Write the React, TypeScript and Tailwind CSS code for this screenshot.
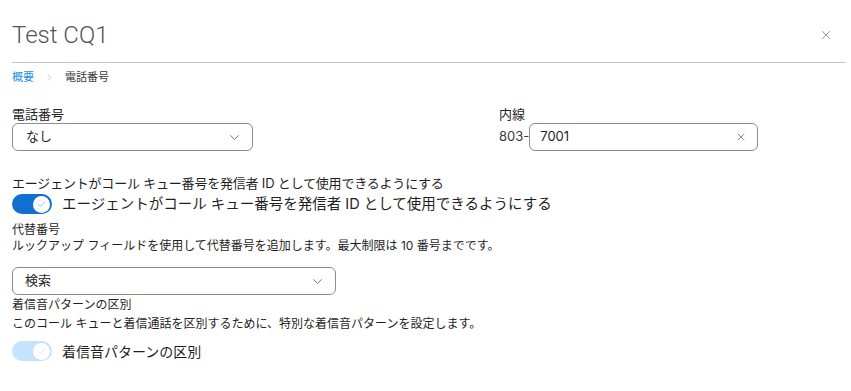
import React from "react";
import { ChevronDown, X, Check, ChevronRight } from "lucide-react";

const jp = { fontFamily: '"Inter", "Noto Sans CJK JP", sans-serif' };

function Toggle({ on, disabled }: { on: boolean; disabled?: boolean }) {
  return (
    <span
      className={
        "flex h-[20px] w-[40px] shrink-0 items-center rounded-full px-[2px] " +
        (on ? "justify-end " : "justify-start ") +
        (disabled ? "bg-[#c5e3fc]" : "bg-[#1170cf]")
      }
    >
      <span className="flex size-[17px] items-center justify-center rounded-full bg-white">
        <Check size={9} strokeWidth={1.5} className={disabled ? "text-[#b9d6ee]" : "text-[#6a8fb8]"} />
      </span>
    </span>
  );
}

export default function App() {
  const [ext, setExt] = React.useState("7001");

  return (
    <div className="h-[391px] w-[851px] overflow-hidden bg-white text-[#1f1f1f]" style={jp}>
      <div className="ml-3 mr-[5px] flex h-[63px] items-center justify-between border-b border-[#c8c8c8] pt-[8px]">
        <h1 className="font-['Roboto'] text-[24px] font-light text-[#545454]">Test CQ1</h1>
        <X size={14} strokeWidth={1.2} className="mr-[13px] text-[#6b6b6b]" />
      </div>

      <div className="px-3">
        <nav className="flex h-[28px] items-center text-[11px] leading-none">
          <span className="text-[#1f8ee6]">概要</span>
          <ChevronRight size={11} strokeWidth={1.2} className="mx-[10px] text-[#9a9a9a]" />
          <span className="text-[#3b3b3b]">電話番号</span>
        </nav>

        <div className="mt-[15px] flex">
          <div className="w-[487px]">
            <div className="text-[13px] leading-[17px]">電話番号</div>
            <button className="flex h-[28px] w-[241px] items-center justify-between rounded-[6px] border border-[#8c8c8c] pl-[13px] pr-[10px] text-[13px]">
              <span>なし</span>
              <ChevronDown size={15} strokeWidth={1.3} className="text-[#545454]" />
            </button>
          </div>
          <div>
            <div className="text-[13px] leading-[17px]">内線</div>
            <div className="flex items-center">
              <span className="text-[13px] text-[#3a3a3a]">803-</span>
              <div className="flex h-[28px] w-[229px] items-center justify-between rounded-[6px] border border-[#8c8c8c] pl-[10px] pr-[10px]">
                <input
                  value={ext}
                  onChange={(e) => setExt(e.target.value)}
                  className="w-[180px] bg-transparent text-[13px] outline-none"
                />
                <X size={12} strokeWidth={1.4} className="text-[#545454]" />
              </div>
            </div>
          </div>
        </div>

        <div className="mt-[22px] text-[13px] leading-[20px] tracking-[-0.2px]">
          エージェントがコール キュー番号を発信者 ID として使用できるようにする
        </div>
        <div className="flex h-[22px] items-center gap-[10px]">
          <Toggle on />
          <span className="text-[14.5px]">エージェントがコール キュー番号を発信者 ID として使用できるようにする</span>
        </div>

        <div className="mt-[7px] text-[12px] leading-[16px]">代替番号</div>
        <div className="text-[12px] leading-[16px]">
          ルックアップ フィールドを使用して代替番号を追加します。最大制限は 10 番号までです。
        </div>
        <button className="mt-[13px] flex h-[28px] w-[324px] items-center justify-between rounded-[6px] border border-[#8c8c8c] pl-[12px] pr-[10px] text-[13px]">
          <span>検索</span>
          <ChevronDown size={15} strokeWidth={1.3} className="text-[#545454]" />
        </button>

        <div className="mt-[1px] text-[12px] leading-[18px]">着信音パターンの区別</div>
        <div className="mt-[1px] text-[12px] leading-[18px]">
          このコール キューと着信通話を区別するために、特別な着信音パターンを設定します。
        </div>
        <div className="mt-[7px] flex h-[22px] items-center gap-[10px]">
          <Toggle on disabled />
          <span className="text-[14px]">着信音パターンの区別</span>
        </div>
      </div>
    </div>
  );
}
